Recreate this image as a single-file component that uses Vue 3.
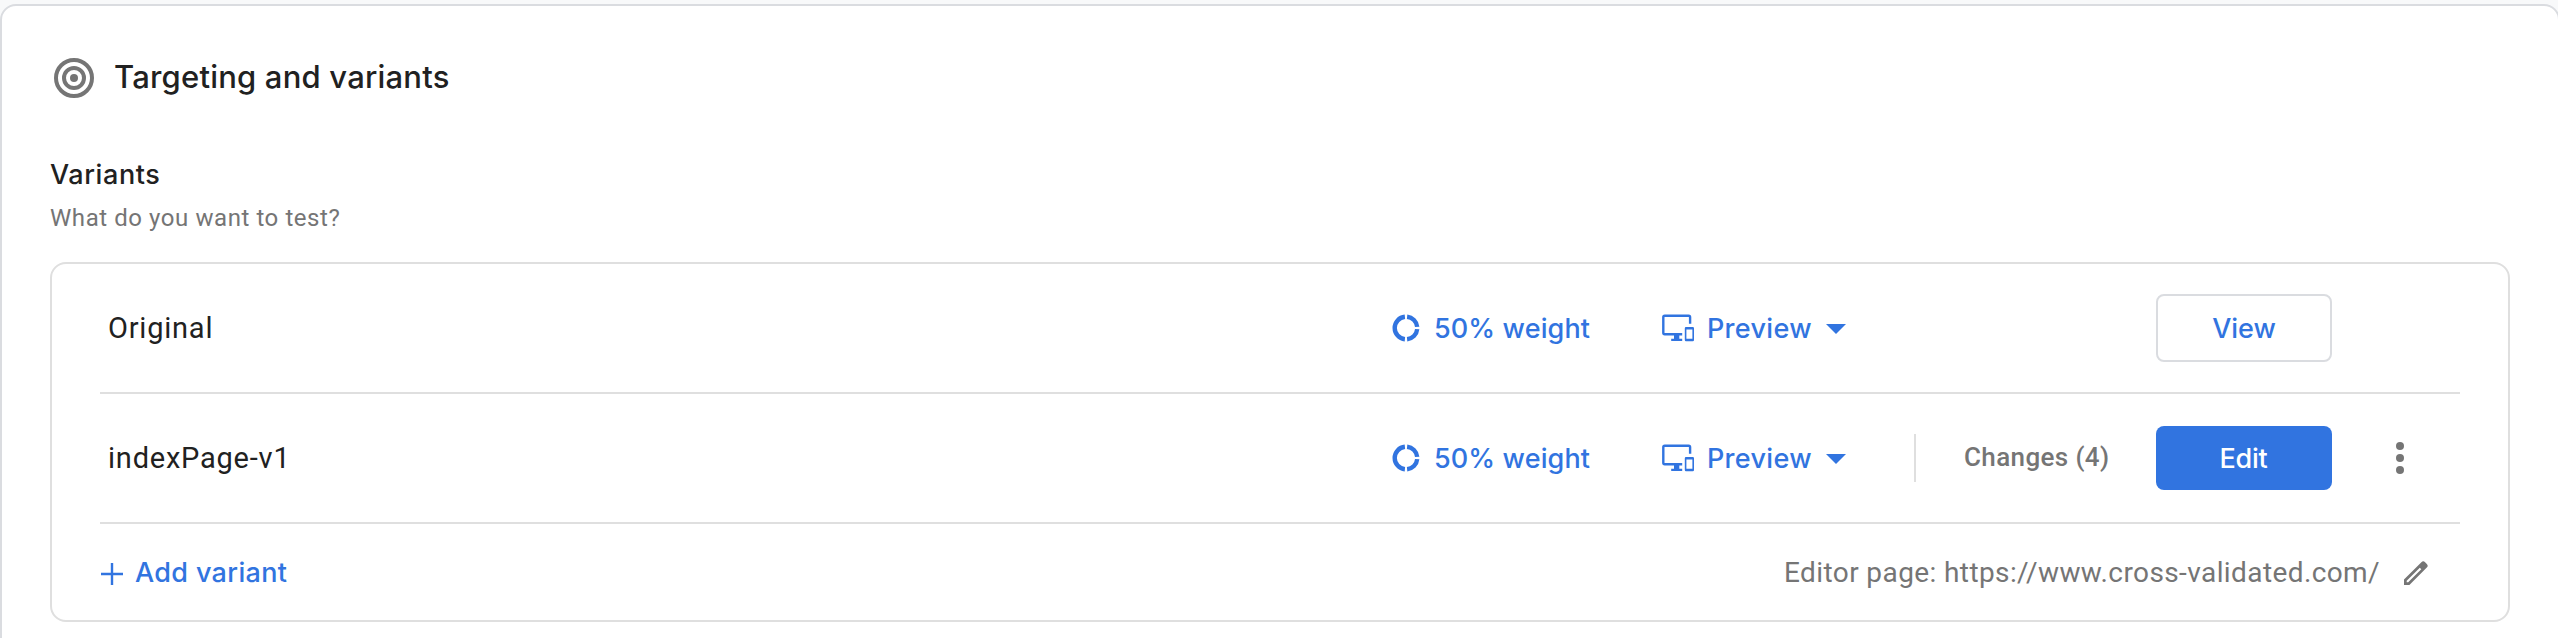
<script setup>
const variants = [
  { name: 'Original', weight: '50% weight', original: true },
  { name: 'indexPage-v1', weight: '50% weight', original: false, changes: 4 },
]
</script>

<template>
  <main class="page">
    <section class="card">
      <header class="card-head">
        <svg class="target" width="40" height="40" viewBox="0 0 40 40" fill="none" stroke="#757575" stroke-width="4">
          <circle cx="20" cy="20" r="18" />
          <circle cx="20" cy="20" r="10" />
          <circle cx="20" cy="20" r="4" fill="#757575" stroke="none" />
        </svg>
        <h1>Targeting and variants</h1>
      </header>
      <h2>Variants</h2>
      <p class="hint">What do you want to test?</p>

      <div class="panel">
        <div v-for="v in variants" :key="v.name" class="row">
          <div class="name">{{ v.name }}</div>
          <div class="weight">
            <svg width="28" height="28" viewBox="0 0 28 28" fill="none" stroke="#3174e0" stroke-width="4.4">
              <path d="M12.9 2.8A11.25 11.25 0 0 0 12.9 25.2" />
              <path d="M15.1 2.8A11.25 11.25 0 0 1 25.2 12.9" />
              <path d="M25.2 15.1A11.25 11.25 0 0 1 15.1 25.2" />
            </svg>
            <span>{{ v.weight }}</span>
          </div>
          <div class="preview">
            <svg class="devices" width="34" height="28" viewBox="0 0 34 28" fill="none" stroke="#3174e0">
              <path d="M28.1 9.7V3.2Q28.1 1.8 26.7 1.8H2.7Q1.3 1.8 1.3 3.2V18.8Q1.3 20.2 2.7 20.2H20.2" stroke-width="2.4" />
              <path d="M12 20.5H17.3V24.8H20.2V27.1H9.2V24.8H12Z" fill="#3174e0" stroke="none" />
              <path fill="#3174e0" stroke="none" fill-rule="evenodd" d="M24 13H30.8Q32 13 32 14.2V26Q32 27.2 30.8 27.2H24Q22.8 27.2 22.8 26V14.2Q22.8 13 24 13ZM24.4 15.4V24.8H30.4V15.4Z" />
            </svg>
            <span>Preview</span>
            <svg class="caret" width="20" height="10" viewBox="0 0 20 10"><path d="M0 0H20L10 10Z" fill="#3174e0" /></svg>
          </div>
          <div class="changes"><span v-if="!v.original">Changes ({{ v.changes }})</span></div>
          <button v-if="v.original" class="btn outline">View</button>
          <button v-else class="btn solid">Edit</button>
          <div class="more">
            <svg v-if="!v.original" width="8" height="32" viewBox="0 0 8 32" fill="#757575">
              <circle cx="4" cy="4" r="4" /><circle cx="4" cy="16" r="4" /><circle cx="4" cy="28" r="4" />
            </svg>
          </div>
        </div>
        <footer class="foot">
          <a class="add">
            <svg width="22" height="22" viewBox="0 0 22 22" stroke="#3174e0" stroke-width="2.4"><path d="M11 0V22M0 11H22" /></svg>
            <span>Add variant</span>
          </a>
          <div class="editor">
            <span>Editor page: https://www.cross-validated.com/</span>
            <svg width="24" height="24" viewBox="0 0 24 24">
              <path fill="#757575" fill-rule="evenodd" d="M0 24V18.6L17.4 1.2Q19.2-.6 21.1 1.2L22.8 2.9Q24.6 4.8 22.8 6.6L5.4 24ZM2.7 19.8V21.3H4.2L17.3 8.2L15.8 6.7Z" />
            </svg>
          </div>
        </footer>
      </div>
    </section>
  </main>
</template>

<style>
body { margin: 0; background: #f8f9fa; overflow: hidden; }
</style>

<style scoped>
* { box-sizing: border-box; }
.page { height: 638px; padding-top: 4px; overflow: hidden; font-family: Roboto, sans-serif; color: #212121; white-space: nowrap; }
.card { width: 2560px; height: 660px; background: #fff; border: 2px solid #dadce0; border-radius: 16px; padding: 52px 48px 0 48px; }
.card-head { display: flex; align-items: center; height: 40px; padding-left: 4px; gap: 20px; }
h1, h2, p { margin: 0; }
h1, h2, .weight, .preview, .btn, .add { font-family: "Google Sans", Inter, sans-serif; font-weight: 500; }
h1 { font-size: 31px; line-height: 38px; letter-spacing: .2px; padding-bottom: 2px; }
h2 { font-size: 27px; line-height: 36px; letter-spacing: .6px; margin-top: 59px; }
.hint { font-size: 24px; line-height: 32px; letter-spacing: .57px; color: #757575; margin-top: 9px; }
.panel { margin-top: 28px; height: 360px; border: 2px solid #dfdfdf; border-radius: 16px; padding: 0 48px; }
.row { height: 130px; border-bottom: 2px solid #dfdfdf; display: flex; align-items: center; }
.name { width: 1292px; padding: 0 0 0 8px; font-size: 29px; letter-spacing: .78px; }
.weight { width: 270px; display: flex; align-items: center; gap: 14px; color: #3174e0; font-size: 27px; letter-spacing: .12px; }
.preview { width: 254px; height: 48px; display: flex; align-items: center; color: #3174e0; font-size: 27px; letter-spacing: .3px; }
.devices { margin-right: 11px; }
.caret { margin: 2px 0 0 14px; }
.row:nth-child(2) .preview { border-right: 2px solid #dfdfdf; }
.changes { width: 240px; padding: 0 0 2px 48px; font-size: 26px; font-weight: 500; letter-spacing: .37px; color: #757575; }
.btn { width: 176px; height: 68px; padding: 0; border-radius: 8px; font-size: 27px; }
.outline { border: 2px solid #dadce0; background: #fff; color: #3174e0; }
.solid { height: 64px; border: 0; background: #3174e0; color: #fff; letter-spacing: -.2px; padding-right: 1px; }
.more { padding-left: 64px; display: flex; }
.foot { height: 96px; display: flex; align-items: center; justify-content: space-between; padding: 4px 32px 0 1px; }
.add, .editor { display: flex; align-items: center; }
.add { gap: 12px; color: #3174e0; font-size: 27px; letter-spacing: .35px; }
.add span, .editor span { padding-bottom: 3px; }
.editor { gap: 24px; color: #757575; font-size: 28px; letter-spacing: .4px; }
.editor svg { margin-bottom: 3px; }
</style>
